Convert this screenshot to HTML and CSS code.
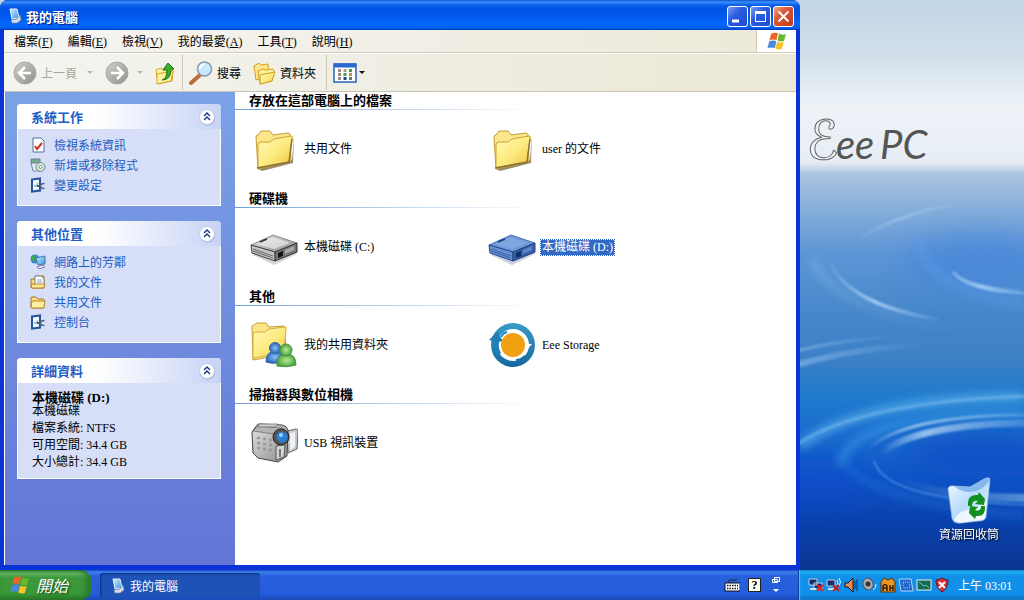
FILE: index.html
```html
<!DOCTYPE html>
<html lang="zh-Hant">
<head>
  <meta charset="UTF-8" />
  <meta name="viewport" content="width=device-width, initial-scale=1.0"/>
  <title>我的電腦</title>
  <link rel="stylesheet" href="styles.css">
</head>
<body>
  <!-- shared icons -->
  <svg class="sprite" width="0" height="0" aria-hidden="true">
    <defs>
      <linearGradient id="gFolder" x1="0" y1="0" x2="1" y2="1">
        <stop offset="0" stop-color="#fff9b4"/><stop offset=".5" stop-color="#fdec84"/><stop offset="1" stop-color="#f2c43c"/>
      </linearGradient>
      <linearGradient id="gGray" x1="0" y1="0" x2="1" y2="1">
        <stop offset="0" stop-color="#cfcfcb"/><stop offset="1" stop-color="#8f8f8b"/>
      </linearGradient>
      <linearGradient id="gScreen" x1="0" y1="0" x2="1" y2="1">
        <stop offset="0" stop-color="#c8f0ff"/><stop offset="1" stop-color="#3a92e0"/>
      </linearGradient>
      <linearGradient id="gMetal" x1="0" y1="0" x2="1" y2="1">
        <stop offset="0" stop-color="#e4e4e4"/><stop offset="1" stop-color="#8c8c8c"/>
      </linearGradient>
      <linearGradient id="gRing" x1="0" y1="0" x2="0" y2="1">
        <stop offset="0" stop-color="#3a9cc8"/><stop offset="1" stop-color="#14699e"/>
      </linearGradient>
      <linearGradient id="gBin" x1="0" y1="0" x2="1" y2="1">
        <stop offset="0" stop-color="#f4fbff"/><stop offset=".5" stop-color="#b8dcfb"/><stop offset="1" stop-color="#e6f4ff"/>
      </linearGradient>
      <radialGradient id="gBlueMan"><stop offset="0" stop-color="#8cc0f4"/><stop offset="1" stop-color="#2a68b8"/></radialGradient>
      <radialGradient id="gGreenMan"><stop offset="0" stop-color="#b8ec98"/><stop offset="1" stop-color="#4aa43c"/></radialGradient>
    </defs>
    <symbol id="i-flag" viewBox="0 0 20 20">
      <path d="M4 3q3-2 7-1L9.500 9q-3-1-7 0z" fill="#ee6428"/>
      <path d="M12 2.500q4 2 7 .5L17 10q-3 1-6.500-.5z" fill="#6cb82c"/>
      <path d="M2.300 10q4-1 7 0L8 17q-3-1-7.500 0z" fill="#4a88e0"/>
      <path d="M10.300 10.500q3 2 6.500.5l-2 7q-3 1-6.500-.5z" fill="#f8c424"/>
    </symbol>
    <symbol id="i-pc" viewBox="0 0 16 16">
      <path d="M3 1h7l2 9-7 1z" fill="url(#gScreen)" stroke="#e4f2fa"/>
      <path d="M4 12l6-1 3-4 1 5-4 3H5z" fill="#d8dce8" stroke="#7a86a4" stroke-width=".7"/>
    </symbol>
    <symbol id="i-chev" viewBox="0 0 18 18">
      <circle cx="9.500" cy="9.800" r="7.800" fill="#a4aed0"/>
      <circle cx="9" cy="9" r="7.500" fill="#fff" stroke="#c4cce4"/>
      <path d="M6 8l3-3 3 3M6 12l3-3 3 3" fill="none" stroke="#1c3c8c" stroke-width="1.500"/>
    </symbol>
    <symbol id="i-folder" viewBox="0 0 48 48">
      <path d="M8 44l34-9 2-25-1 28-31 8z" fill="#6c5c2c" opacity=".7"/>
      <path d="M6 12q0-2 2-2l3-4h9l3 4 15-2q2 0 2 2l1 26-33 8z" fill="#fbe68c" stroke="#c89a34"/>
      <path d="M8 20q0-3 3-3h9l4-3 17-3q2 0 1 2l-3 24-31 6z" fill="url(#gFolder)" stroke="#d0a030"/>
      <path d="M7 43l32-6 3-23" fill="none" stroke="#8c7430" stroke-width="1.500"/>
    </symbol>
    <symbol id="i-sfolder" viewBox="0 0 16 16">
      <path d="M1 13V4q0-1 1-1h4l2 2h5q1 0 1 1v7q0 1-1 1H2q-1 0-1-1z" fill="#fbe088" stroke="#a87420"/>
      <path d="M1 13l1-6h13l-1 6q0 1-1 1H2z" fill="#fff0a0" stroke="#b88428"/>
    </symbol>
    <symbol id="i-control" viewBox="0 0 16 16">
      <path d="M2 2.500l8-1v12l-8 1z" fill="#f4f8ff" stroke="#28569c" stroke-width="2"/>
      <path d="M4 8l1.500 2L8 6" fill="none" stroke="#7894bc"/>
      <path d="M7 9h4" stroke="#3c5a84" stroke-width="2"/>
      <path d="M14.500 6.500q-4 0-4 2.500t4 2.500" fill="none" stroke="#50647c" stroke-width="1.500"/>
    </symbol>
    <symbol id="i-drive" viewBox="0 0 48 48">
      <path d="M3 32l21 10 23-11-2-3H5z" fill="#888" opacity=".35"/>
      <path d="M1 22L23 12 47 20 25 29z" fill="url(#gMetal)" stroke="#777" stroke-width=".8"/>
      <path d="M7 21l16-7 17 6-16 6z" fill="#f0f0f0" opacity=".65"/>
      <path d="M1 22l24 7v9L2 30z" fill="#c4c4c4" stroke="#444"/>
      <path d="M25 29l22-9v9l-22 9z" fill="#777" stroke="#333"/>
      <path d="M3 26l20 7M3 28l20 7" stroke="#666" fill="none"/>
      <path d="M28 30l5-2v5l-5 2z" fill="#111"/>
      <path d="M35 27l9-4v4l-9 4z" fill="#aaa"/>
      <path d="M10 19l7-3" stroke="#333" stroke-width="1.500"/>
    </symbol>
    <symbol id="i-drive-sel" viewBox="0 0 48 48">
      <path d="M3 32l21 10 23-11-2-3H5z" fill="#6878a8" opacity=".35"/>
      <path d="M1 22L23 12 47 20 25 29z" fill="#6e98d8" stroke="#3860a4" stroke-width=".8"/>
      <path d="M7 21l16-7 17 6-16 6z" fill="#88aee4" opacity=".65"/>
      <path d="M1 22l24 7v9L2 30z" fill="#6890d0" stroke="#24488c"/>
      <path d="M25 29l22-9v9l-22 9z" fill="#385ea4" stroke="#20407c"/>
      <path d="M3 26l20 7M3 28l20 7" stroke="#3a62a8" fill="none"/>
      <path d="M28 30l5-2v5l-5 2z" fill="#102c64"/>
      <path d="M35 27l9-4v4l-9 4z" fill="#5a84cc"/>
      <path d="M10 19l7-3" stroke="#183c80" stroke-width="1.500"/>
    </symbol>
  </svg>

  <main class="desktop">
    <section class="window" aria-label="我的電腦">
      <header class="titlebar">
        <svg class="icon16"><use href="#i-pc"/></svg>
        <h1>我的電腦</h1>
        <button class="win-btn" type="button" aria-label="最小化"><svg viewBox="0 0 19 19"><path d="M4 14h7" stroke="#fff" stroke-width="3"/></svg></button>
        <button class="win-btn" type="button" aria-label="最大化"><svg viewBox="0 0 19 19"><path d="M4.500 5v9.500h10V5" fill="none" stroke="#fff"/><path d="M4 5.500h11" stroke="#fff" stroke-width="3"/></svg></button>
        <button class="win-btn close" type="button" aria-label="關閉"><svg viewBox="0 0 19 19"><path d="M4.500 4.500l10 10M14.500 4.500l-10 10" stroke="#fff" stroke-width="2"/></svg></button>
      </header>

      <nav class="menubar">
        <button type="button">檔案(<u>F</u>)</button>
        <button type="button">編輯(<u>E</u>)</button>
        <button type="button">檢視(<u>V</u>)</button>
        <button type="button">我的最愛(<u>A</u>)</button>
        <button type="button">工具(<u>T</u>)</button>
        <button type="button">說明(<u>H</u>)</button>
        <div class="throbber"><svg width="20" height="20"><use href="#i-flag"/></svg></div>
      </nav>

      <div class="toolbar">
        <button class="tool back" type="button" disabled>
          <svg class="icon24" viewBox="0 0 24 24"><circle cx="12" cy="12" r="11" fill="url(#gGray)" stroke="#a8a8a4"/><path d="M18 12H7m5-6l-6 6 6 6" fill="none" stroke="#fff" stroke-width="2.500"/></svg>
          上一頁
          <i class="caret"></i>
        </button>
        <button class="tool forward" type="button" disabled aria-label="下一頁">
          <svg class="icon24" viewBox="0 0 24 24"><circle cx="12" cy="12" r="11" fill="url(#gGray)" stroke="#a8a8a4"/><path d="M6 12h11m-5-6l6 6-6 6" fill="none" stroke="#fff" stroke-width="2.500"/></svg>
          <i class="caret"></i>
        </button>
        <button class="tool up" type="button" aria-label="上一層">
          <svg class="icon24" viewBox="0 0 24 24">
            <path d="M3 9l5-2 2 2 9-2 1 3-1 10-14 3z" fill="url(#gFolder)" stroke="#d4a428"/>
            <path d="M4 13l16-3-2 10-14 3z" fill="#fff0a0" stroke="#d4a428"/>
            <path d="M9 19q5-1 5-10h-4l5-7 6 6h-3q0 11-9 11z" fill="#38b028" stroke="#147410"/>
          </svg>
        </button>
        <span class="sep"></span>
        <button class="tool search" type="button">
          <svg class="icon24" viewBox="0 0 24 24"><path d="M2 22l9-8" stroke="#b87038" stroke-width="4" stroke-linecap="round"/><circle cx="15.500" cy="8" r="7" fill="#c8e8fc" stroke="#8898b4" stroke-width="1.500"/><path d="M10.500 8q1-4 5-5" stroke="#fff" stroke-width="2" fill="none"/></svg>
          搜尋
        </button>
        <button class="tool folders" type="button">
          <svg class="icon24" viewBox="0 0 24 24">
            <path d="M2 5l5-3 2 2 7-1 1 12-13 4z" fill="#fbe68c" stroke="#d4a024"/>
            <path d="M6 10l5-2 2 1 8-1 1 2-2 10-12 3z" fill="#fdee98" stroke="#d4a024"/>
            <path d="M8 14l15-3-3 9-12 3z" fill="url(#gFolder)" stroke="#d4a024"/>
          </svg>
          資料夾
        </button>
        <span class="sep"></span>
        <button class="tool views" type="button" aria-label="檢視方式">
          <svg class="icon24" viewBox="0 0 24 24">
            <rect x="1" y="3" width="22" height="18" fill="#fff" stroke="#2860b8" stroke-width="1.500"/>
            <path d="M1 4.500h22" stroke="#2868d0" stroke-width="4"/>
            <path d="M5 9.500h3M5 13.500h3M5 17.500h3" stroke="#a08888" stroke-width="3"/>
            <path d="M10.500 9.500h3" stroke="#b09890" stroke-width="3"/><path d="M10.500 13.500h3" stroke="#48a048" stroke-width="3"/><path d="M10.500 17.500h3" stroke="#204890" stroke-width="3"/>
            <path d="M16 9.500h3" stroke="#38a048" stroke-width="3"/><path d="M16 13.500h3" stroke="#d08858" stroke-width="3"/><path d="M16 17.500h3" stroke="#588868" stroke-width="3"/>
          </svg>
          <i class="caret"></i>
        </button>
      </div>

      <div class="content">
        <aside class="sidebar">
          <section class="panel">
            <header><h2>系統工作</h2><button type="button" aria-label="摺疊系統工作"><svg><use href="#i-chev"/></svg></button></header>
            <ul>
              <li><a href="#info"><svg class="icon16" viewBox="0 0 16 16"><path d="M3 1h8l3 3v11H3z" fill="#fff" stroke="#54709c"/><path d="M5 9l2 3 5-6" fill="none" stroke="#cc3424" stroke-width="2"/></svg>檢視系統資訊</a></li>
              <li><a href="#programs"><svg class="icon16" viewBox="0 0 16 16"><path d="M1 2h9v4H1z" fill="#74b08c" stroke="#68809c"/><path d="M1 6h9v8H3z" fill="#e4e8ee" stroke="#7888a0"/><circle cx="10.500" cy="10" r="4.500" fill="#d4ecdc" stroke="#708094"/><circle cx="10.500" cy="10" r="1.500" fill="#fff" stroke="#70a078"/></svg>新增或移除程式</a></li>
              <li><a href="#settings"><svg class="icon16"><use href="#i-control"/></svg>變更設定</a></li>
            </ul>
          </section>

          <section class="panel">
            <header><h2>其他位置</h2><button type="button" aria-label="摺疊其他位置"><svg><use href="#i-chev"/></svg></button></header>
            <ul>
              <li><a href="#network"><svg class="icon16" viewBox="0 0 16 16"><circle cx="5" cy="5" r="4.500" fill="#3088d8"/><path d="M2 2q3-2 4 1l-2 5-3-2z" fill="#40a850"/><path d="M6 4l9-2v8l-7 1z" fill="url(#gScreen)" stroke="#4878b4"/><path d="M7 13l6-2 2 2-6 2z" fill="#ece8f8" stroke="#8878b0"/></svg>網路上的芳鄰</a></li>
              <li><a href="#docs"><svg class="icon16" viewBox="0 0 16 16"><path d="M1 5h4V2h9v12H2q-1 0-1-1z" fill="#fbd878" stroke="#a87420"/><path d="M5 2h6l3 3v6H5z" fill="#fff" stroke="#7888a0"/><path d="M7 6h5M7 8h5" stroke="#7ca4d0"/><path d="M1 13l1-3h13l-1 3-1 1H2z" fill="#fdea94" stroke="#b88428"/></svg>我的文件</a></li>
              <li><a href="#shared"><svg class="icon16"><use href="#i-sfolder"/></svg>共用文件</a></li>
              <li><a href="#control"><svg class="icon16"><use href="#i-control"/></svg>控制台</a></li>
            </ul>
          </section>

          <section class="panel">
            <header><h2>詳細資料</h2><button type="button" aria-label="摺疊詳細資料"><svg><use href="#i-chev"/></svg></button></header>
            <div class="details">
              <h3>本機磁碟 (D:)</h3>
              <p>本機磁碟</p>
              <p>檔案系統: NTFS</p>
              <p>可用空間: 34.4 GB</p>
              <p>大小總計: 34.4 GB</p>
            </div>
          </section>
        </aside>

        <div class="files">
          <section class="group">
            <h2>存放在這部電腦上的檔案</h2>
            <div class="items">
              <a href="#shared-docs"><svg class="icon48"><use href="#i-folder"/></svg><span>共用文件</span></a>
              <a href="#user-docs"><svg class="icon48"><use href="#i-folder"/></svg><span>user 的文件</span></a>
            </div>
          </section>
          <section class="group">
            <h2>硬碟機</h2>
            <div class="items">
              <a href="#c"><svg class="icon48"><use href="#i-drive"/></svg><span>本機磁碟 (C:)</span></a>
              <a href="#d" class="selected"><svg class="icon48"><use href="#i-drive-sel"/></svg><span>本機磁碟 (D:)</span></a>
            </div>
          </section>
          <section class="group">
            <h2>其他</h2>
            <div class="items">
              <a href="#my-shared">
                <svg class="icon48" viewBox="0 0 48 48">
                  <path d="M2 6q0-2 2-2l3-2h9l3 4 14-1q2 0 2 2l1 26-33 6z" fill="#fbe68c" stroke="#c89a34"/>
                  <path d="M3 14q0-3 3-3h9l4-3 16-2q2 0 1 2l-2 24-31 5z" fill="url(#gFolder)" stroke="#d8ac40"/>
                  <path d="M16 41q0-11 10-11 8 0 8 10-9 4-18 1z" fill="url(#gBlueMan)" stroke="#3468a8"/>
                  <circle cx="25" cy="27" r="5.500" fill="url(#gBlueMan)" stroke="#3468a8"/>
                  <path d="M27 45q-1-12 10-12 9 0 9 11-9 3-19 1z" fill="url(#gGreenMan)" stroke="#489040"/>
                  <circle cx="36" cy="29" r="6" fill="url(#gGreenMan)" stroke="#489040"/>
                </svg>
                <span>我的共用資料夾</span></a>
              <a href="#storage">
                <svg class="icon48" viewBox="0 0 48 48">
                  <circle cx="25" cy="24" r="22" fill="url(#gRing)"/>
                  <circle cx="25" cy="24" r="16" fill="#fff"/>
                  <path d="M1 19l8-8 6 9-4 1q-1 6 2 11l-4 3q-4-7-4-15z" fill="#1f80b4"/>
                  <path d="M13 16q2-4 6-5" fill="none" stroke="#2888b8" stroke-width="2"/>
                  <path d="M37 35q-4 4-9 4" fill="none" stroke="#1c70a4" stroke-width="2"/>
                  <path d="M36 14q4 4 4 9h4l-6 7-7-6h4q0-6-4-8z" fill="#fff"/>
                  <circle cx="25" cy="24" r="12" fill="#f0a010"/>
                </svg>
                <span>Eee Storage</span></a>
            </div>
          </section>
          <section class="group">
            <h2>掃描器與數位相機</h2>
            <div class="items">
              <a href="#usb">
                <svg class="icon48" viewBox="0 0 48 48">
                  <path d="M37 12l9-2q2 0 2 2l-1 18-9 4z" fill="#c4c8cc" stroke="#666"/>
                  <path d="M40 14l5-1v15l-5 3z" fill="#eef2f4"/>
                  <path d="M2 13l5-7q1-1 3-1l22 1q5 1 6 5l-1 26-9 6-20-4-5-5z" fill="url(#gMetal)" stroke="#444"/>
                  <path d="M3 12l5-5 24 2 4 3-12 3z" fill="#b4b4b4" stroke="#666" stroke-width=".7"/>
                  <path d="M8 5l20 0-3 3H9z" fill="#ccc" stroke="#666" stroke-width=".7"/>
                  <path d="M7 19h3m3 1h3m3 1h3M7 24h3m3 1h3m3 1h3M7 29h3m3 1h3m3 1h3" stroke="#999" stroke-width="2.500"/>
                  <circle cx="31" cy="18" r="8" fill="#555" stroke="#222"/>
                  <circle cx="32" cy="18" r="5.500" fill="#2a80d4"/><circle cx="31" cy="16" r="2" fill="#9cd4fc"/>
                  <path d="M26 27l9-1-1 12-8 3z" fill="#d4d4d4" stroke="#555"/><path d="M30 30v8" stroke="#777" stroke-width="2"/>
                </svg>
                <span>USB 視訊裝置</span></a>
            </div>
          </section>
        </div>
      </div>
    </section>

    <section class="backdrop">
      <!-- water wallpaper -->
      <svg class="wallpaper" viewBox="0 0 224 570" preserveAspectRatio="none" aria-hidden="true">
        <defs>
          <linearGradient id="gWater" x1="0" y1="0" x2="0" y2="1">
            <stop offset="0" stop-color="#c2d5e6"/><stop offset=".1" stop-color="#d3e0eb"/><stop offset=".19" stop-color="#eef3f8"/>
            <stop offset=".285" stop-color="#e7edf5"/><stop offset=".305" stop-color="#abc5e0"/><stop offset=".36" stop-color="#8ab0db"/>
            <stop offset=".44" stop-color="#5f97d6"/><stop offset=".55" stop-color="#4687ca"/><stop offset=".63" stop-color="#3c80c6"/>
            <stop offset=".7" stop-color="#1f7acd"/><stop offset=".77" stop-color="#1a6ace"/><stop offset=".84" stop-color="#1054c6"/>
            <stop offset=".91" stop-color="#0a42b0"/><stop offset="1" stop-color="#0a3690"/>
          </linearGradient>
          <linearGradient id="gFadeL"><stop offset="0" stop-color="#cfe6fa" stop-opacity="0"/><stop offset=".3" stop-color="#cfe6fa" stop-opacity=".7"/><stop offset="1" stop-color="#a0ccf4" stop-opacity=".3"/></linearGradient>
          <linearGradient id="gFadeB"><stop offset="0" stop-color="#b4d8fa" stop-opacity=".1"/><stop offset=".4" stop-color="#b4d8fa" stop-opacity=".8"/><stop offset="1" stop-color="#b4d8fa" stop-opacity="0"/></linearGradient>
          <linearGradient id="gFadeR"><stop offset="0" stop-color="#94c4ec" stop-opacity=".8"/><stop offset="1" stop-color="#94c4ec" stop-opacity="0"/></linearGradient>
          <linearGradient id="gFadeIn"><stop offset="0" stop-color="#74b4ec" stop-opacity="0"/><stop offset="1" stop-color="#84bcec"/></linearGradient>
          <filter id="soft1"><feGaussianBlur stdDeviation="1"/></filter>
          <filter id="soft2"><feGaussianBlur stdDeviation="4"/></filter>
          <filter id="soft3" x="-50%" y="-100%" width="200%" height="300%"><feGaussianBlur stdDeviation="14"/></filter>
        </defs>
        <rect width="224" height="570" fill="url(#gWater)"/>
        <ellipse cx="180" cy="262" rx="75" ry="30" fill="#3c80dc" opacity=".5" filter="url(#soft3)"/>
        <ellipse cx="185" cy="455" rx="80" ry="24" fill="#0c4cc4" opacity=".7" filter="url(#soft3)"/>
        <ellipse cx="10" cy="480" rx="60" ry="20" fill="#0c48cc" opacity=".6" filter="url(#soft3)"/>
        <g fill="none" filter="url(#soft2)">
          <path d="M12 258Q30 310 160 330" stroke="url(#gFadeR)" stroke-width="5" opacity=".6"/>
          <path d="M120 240Q125 290 224 304" stroke="#60a4f0" stroke-width="6" opacity=".5"/>
          <path d="M0 446Q60 398 224 397" stroke="#5cb4ec" stroke-width="9" opacity=".7"/>
          <path d="M40 465Q50 414 224 412" stroke="#3ca0e8" stroke-width="8" opacity=".6"/>
          <path d="M45 460Q60 500 224 516" stroke="#1c74d8" stroke-width="6" opacity=".6"/>
        </g>
        <g fill="none" filter="url(#soft1)">
          <path d="M58 239Q110 208 170 203" stroke="url(#gFadeB)" stroke-width="3" opacity=".6"/>
          <path d="M30 263Q50 306 143 320" stroke="url(#gFadeB)" stroke-width="4"/>
          <path d="M153 272Q168 290 224 291" stroke="url(#gFadeB)" stroke-width="4"/>
          <path d="M153 272Q170 292 224 293" stroke="#9cd0fc" stroke-width="2" opacity=".6"/>
          <path d="M-4 365Q60 347 125 345" stroke="url(#gFadeR)" stroke-width="6" opacity=".7"/>
          <path d="M-4 351Q50 338 100 337" stroke="url(#gFadeR)" stroke-width="3" opacity=".7"/>
          <path d="M-4 445Q60 402 228 396" stroke="#9cccf4" stroke-width="3" opacity=".4"/>
          <path d="M65 452Q100 415 228 415" stroke="url(#gFadeL)" stroke-width="3"/>
          <path d="M80 454Q115 424 228 423" stroke="url(#gFadeL)" stroke-width="7"/>
          <path d="M74 461Q85 500 228 505" stroke="#4c9ce8" stroke-width="2" opacity=".7"/>
          <path d="M97 479Q140 498 228 498" stroke="url(#gFadeIn)" stroke-width="8" opacity=".6"/>
        </g>
      </svg>
      <svg class="brand" viewBox="0 0 140 70" role="img" aria-label="Eee PC">
        <text x="2" y="54" class="brand-e">ℰ</text>
        <text x="32" y="54" class="brand-ee">ee</text>
        <text x="76" y="54" class="brand-pc">PC</text>
      </svg>
      <a class="bin" href="#bin">
        <svg class="icon48" viewBox="0 0 48 48">
          <path d="M3 12q2-3 6-2l16 1L39 3q6-3 6 1l-4 37q-1 4-7 4l-18 2q-8 1-9-5z" fill="url(#gBin)" stroke="#98bce0" stroke-width=".7"/>
          <path d="M9 10l16 1L39 3q5-2 6 1-8 12-20 12-9 0-16-6z" fill="#86b8ec"/>
          <path d="M9 44q4-9 14-10 10-1 19-9l-3 18-24 4z" fill="#fff" opacity=".7"/>
          <path d="M23 30q-1-12 10-11l1-3 6 7-1 6-9-1 3-3q-6-1-6 5z" fill="#149020"/>
          <path d="M40 30q1 11-9 10l-1 3-6-6 1-7 8 1-3 3q6 2 6-4z" fill="#149020"/>
        </svg>
        <span>資源回收筒</span>
      </a>
    </section>
  </main>

  <footer class="taskbar">
    <button class="start" type="button"><svg width="20" height="20"><use href="#i-flag"/></svg>開始</button>
    <button class="task" type="button"><svg class="icon16"><use href="#i-pc"/></svg>我的電腦</button>
    <div class="langbar">
      <svg class="icon16" viewBox="0 0 16 16"><path d="M4 5q1-3 4-2t5-1" fill="none" stroke="#222"/><rect x="1" y="6" width="15" height="8" fill="#fff" stroke="#111"/><path d="M3 8.500h11M3 11.500h11" stroke="#111" stroke-width="1.500" stroke-dasharray="1.500 1"/></svg>
      <span class="help">?</span>
      <svg class="lang-opts" viewBox="0 0 10 18"><path d="M3.500 1.500h5v4h-5zM1.500 3.500h5v3h-5z" fill="#2a5cd8" stroke="#fff"/><path d="M2 13h6l-3 3z" fill="#fff"/></svg>
    </div>
    <div class="tray">
      <svg class="icon16" viewBox="0 0 16 16"><path d="M1 2h8v6H1zM6 6h8v6H6z" fill="#1c2c6c" stroke="#c0cce4"/><path d="M2 12h6" stroke="#d8e0f0" stroke-width="2"/><path d="M9 8l6 6M15 8l-6 6" stroke="#e02020" stroke-width="2"/></svg>
      <svg class="icon16" viewBox="0 0 16 16"><path d="M1 3h8v6H1z" fill="#1c2c6c" stroke="#c0cce4"/><path d="M2 12h7" stroke="#d8e0f0" stroke-width="2"/><path d="M11 3q2 2 0 5M13 1q3 4 0 8" fill="none" stroke="#e8f0ff"/><path d="M7 8l6 6M13 8l-6 6" stroke="#c02028" stroke-width="2"/></svg>
      <svg class="icon16" viewBox="0 0 16 16"><path d="M1 6h3l5-5v14l-5-5H1z" fill="#e88c58" stroke="#1c1010"/><path d="M11 4v8M13 2v12" stroke="#1c2c50"/></svg>
      <svg class="icon16" viewBox="0 0 16 16"><ellipse cx="6" cy="7" rx="5" ry="6" fill="#a8acb0" stroke="#50545c" transform="rotate(-20 6 7)"/><circle cx="6" cy="7" r="2.500" fill="#333"/><path d="M11 13q3-2 3-6" fill="none" stroke="#e4ecf8"/></svg>
      <svg class="icon16" viewBox="0 0 16 16"><path d="M1 5l3-4 4 2 4-2 3 4v10H1z" fill="#e89820" stroke="#583008"/><path d="M3 14V9q2-3 4 0v5M3 11h4M10 14V8m3 0v6M10 11h3" fill="none" stroke="#401808" stroke-width="1.500"/></svg>
      <svg class="icon16" viewBox="0 0 16 16"><path d="M1 2h12l2 12H3z" fill="#2068c8" stroke="#b4d4f4"/><path d="M5 5h6l1 6H6z" fill="none" stroke="#9cc8f4" stroke-dasharray="1 1"/></svg>
      <svg class="icon16" viewBox="0 0 16 16"><rect x="1" y="3" width="14" height="10" fill="#186858" stroke="#e4f0ec"/><path d="M3 5l5 4 2-1 3 3" fill="none" stroke="#70c8a8"/></svg>
      <svg class="icon16" viewBox="0 0 16 16"><path d="M8 1q3 2 6 2 0 8-6 12-6-4-6-12 3 0 6-2z" fill="#d43038" stroke="#701018"/><path d="M5 5l6 6M11 5l-6 6" stroke="#fff" stroke-width="2"/></svg>
      <time>上午 03:01</time>
    </div>
  </footer>
</body>
</html>
```
FILE: styles.css
```css
* {
  box-sizing: border-box;
}
body {
  margin: 0;
  min-height: 100vh;
  display: flex;
  flex-direction: column;
  font-family: "Liberation Serif", "Noto Sans CJK TC", sans-serif;
  font-size: 12px;
  color: #000;
}
h1, h2, h3, p, ul {
  margin: 0;
  padding: 0;
  font-size: 13px;
}
button {
  margin: 0;
  padding: 0;
  border: 0;
  background: none;
  font: inherit;
  color: inherit;
}
a {
  color: inherit;
  text-decoration: none;
}
svg {
  flex: none;
}
.sprite {
  position: absolute;
}
.icon16 {
  width: 16px;
  height: 16px;
}
.icon24 {
  width: 24px;
  height: 24px;
}
.icon48 {
  width: 48px;
  height: 48px;
}

/* desktop */
.desktop {
  flex: 1;
  display: flex;
  background: #c2d5e6;
}
.backdrop {
  position: relative;
  width: 224px;
  display: flex;
  flex-direction: column;
  justify-content: space-between;
  padding: 105px 25px 26px 4px;
}
.wallpaper {
  position: absolute;
  inset: 0;
  width: 100%;
  height: 100%;
}
.brand {
  position: relative;
  width: 140px;
  height: 70px;
  overflow: visible;
}
.brand-e {
  font-family: "DejaVu Sans", sans-serif;
  font-style: italic;
  font-size: 54px;
  fill: #eef2f7;
  stroke: #666;
}
.brand-ee,
.brand-pc {
  font-family: Lato, sans-serif;
  font-style: italic;
  font-size: 40px;
  fill: #555;
}
.bin {
  position: relative;
  align-self: flex-end;
  display: flex;
  flex-direction: column;
  align-items: center;
  gap: 2px;
  line-height: 18px;
  color: #fff;
  text-shadow: 1px 1px 2px #000;
}

/* window */
.window {
  flex: 1;
  display: flex;
  flex-direction: column;
  background: #0a34d8;
  border-radius: 8px 8px 0 0;
}
.titlebar {
  display: flex;
  align-items: center;
  gap: 2px;
  height: 30px;
  padding: 2px 6px 0 7px;
  border-radius: 8px 8px 0 0;
  background: linear-gradient(#0a50d0 0, #3a90fc 2px, #0c60ec 5px, #0054e4 9px, #0058ec 16px, #0468fc 24px, #0460f4 28px, #0038b4 30px);
}
.titlebar h1 {
  flex: 1;
  padding-left: 1px;
  color: #fff;
  text-shadow: 1px 1px 1px #0a1883;
}
.win-btn {
  display: flex;
  width: 21px;
  height: 21px;
  border: 1px solid #fff;
  border-radius: 3px;
  background: linear-gradient(135deg, #7c9cf4, #2c5ce0 40%, #1c4cd0);
}
.win-btn svg {
  width: 19px;
  height: 19px;
}
.win-btn.close {
  background: linear-gradient(135deg, #f0a48c, #dc5434 40%, #c03c18);
}
.menubar {
  display: flex;
  align-items: stretch;
  gap: 15px;
  height: 23px;
  margin: 0 4px;
  padding-left: 10px;
  border-bottom: 1px solid #d0ccb8;
  background: linear-gradient(90deg, #f5f5f3, #ece9d8);
}
.throbber {
  display: flex;
  align-items: center;
  justify-content: center;
  width: 40px;
  margin-left: auto;
  border-left: 1px solid #ccc8b4;
  background: #fff;
}
.toolbar {
  display: flex;
  align-items: center;
  height: 39px;
  margin: 0 4px;
  padding-left: 9px;
  border-top: 1px solid #fff;
  border-bottom: 1px solid #c8c4b0;
  background: linear-gradient(90deg, #f4f4f0, #ebe8d6);
}
.tool {
  display: flex;
  align-items: center;
  gap: 4px;
}
.tool:disabled {
  color: #a8a69a;
}
.caret {
  border: 3px solid transparent;
  border-top-color: #111;
  border-bottom: 0;
}
.tool:disabled .caret {
  border-top-color: #bcb8a8;
}
.back .caret {
  margin-left: 6px;
}
.forward {
  gap: 8px;
  margin-left: 12px;
}
.up {
  margin: 0 5px 0 10px;
}
.views {
  gap: 2px;
}
.folders {
  margin-left: 11px;
}
.sep {
  width: 1px;
  height: 35px;
  margin: 0 6px 0 0;
  background: #ccc8b4;
}
.folders + .sep {
  margin-left: 10px;
}

/* explorer body */
.content {
  flex: 1;
  display: flex;
  margin: 0 4px 5px;
  border: solid #fff;
  border-width: 0 0 0 1px;
  background: #fff;
}
.sidebar {
  width: 230px;
  padding: 12px 14px 12px 12px;
  display: flex;
  flex-direction: column;
  gap: 15px;
  background: linear-gradient(#7ba2e7, #6375d6);
}
.panel {
  background: #d6dff7;
  border: solid #fff;
  border-width: 0 1px 1px;
  border-radius: 4px 4px 0 0;
}
.panel header {
  display: flex;
  align-items: center;
  justify-content: space-between;
  height: 25px;
  margin: 0 -1px;
  padding: 0 5px 0 14px;
  border-radius: 4px 4px 0 0;
  background: linear-gradient(90deg, #fff 40%, #c6d3f7);
  color: #215dc6;
}
.panel header button,
.panel header svg {
  display: block;
  width: 18px;
  height: 18px;
}
.panel ul {
  list-style: none;
  padding: 6px 12px 10px;
  font-size: 12px;
}
.panel li a {
  display: flex;
  align-items: center;
  gap: 8px;
  height: 20px;
  color: #215dc6;
}
.details {
  padding: 10px 14px 7px;
}
.details h3 {
  line-height: 10px;
}
.details p {
  font-size: 12px;
  line-height: 17px;
}
.files {
  flex: 1;
  padding-top: 1px;
}
.group h2 {
  height: 17px;
  padding-left: 14px;
  line-height: 15px;
  background: linear-gradient(90deg, #70a0d8, #fff 300px) bottom / 100% 1px no-repeat;
}
.items {
  display: flex;
  padding: 15px 15px 18px;
}
.items a {
  display: flex;
  align-items: center;
  gap: 5px;
  width: 238px;
}
.items span {
  padding: 0 1px;
  line-height: 15px;
}
.items .selected span {
  background: #316ac5;
  color: #fff;
  outline: 1px dotted #316ac5;
}

/* taskbar */
.taskbar {
  display: flex;
  height: 30px;
  background: linear-gradient(#1c48b8 0, #3c80f0 2px, #2860dc 6px, #245cdc 24px, #1c48b4 30px);
  color: #fff;
}
.start {
  display: flex;
  align-items: center;
  gap: 6px;
  width: 91px;
  padding-left: 10px;
  border-radius: 0 10px 10px 0;
  background: linear-gradient(#2c7c2c 0, #6cbc6c 3px, #3c983c 8px, #389838 24px, #287828 30px);
  box-shadow: inset -4px 0 6px #287428;
  font-size: 16px;
  font-style: italic;
  text-shadow: 1px 1px 2px #143c14;
}
.task {
  display: flex;
  align-items: center;
  gap: 4px;
  width: 160px;
  margin: 3px 0 2px 9px;
  padding-left: 10px;
  border-radius: 3px;
  background: #1e52b7;
  box-shadow: inset 1px 1px 2px #0c3080;
}
.langbar {
  display: flex;
  align-items: center;
  gap: 8px;
  margin-left: auto;
  padding-right: 17px;
}
.help {
  width: 13px;
  height: 14px;
  margin-right: 2px;
  background: #fffff0;
  border: 1px solid #222;
  color: #000;
  font-weight: bold;
  line-height: 12px;
  text-align: center;
}
.lang-opts {
  width: 10px;
  height: 18px;
}
.tray {
  display: flex;
  align-items: center;
  gap: 2px;
  width: 226px;
  padding-left: 9px;
  border-left: 1px solid #1040a0;
  background: linear-gradient(#0c70c8 0, #1cb0f4 2px, #1290e8 6px, #1090ec 24px, #0c70c0 30px);
  box-shadow: inset 1px 0 1px #50c8f8;
}
.tray time {
  margin-left: 6px;
}
```
